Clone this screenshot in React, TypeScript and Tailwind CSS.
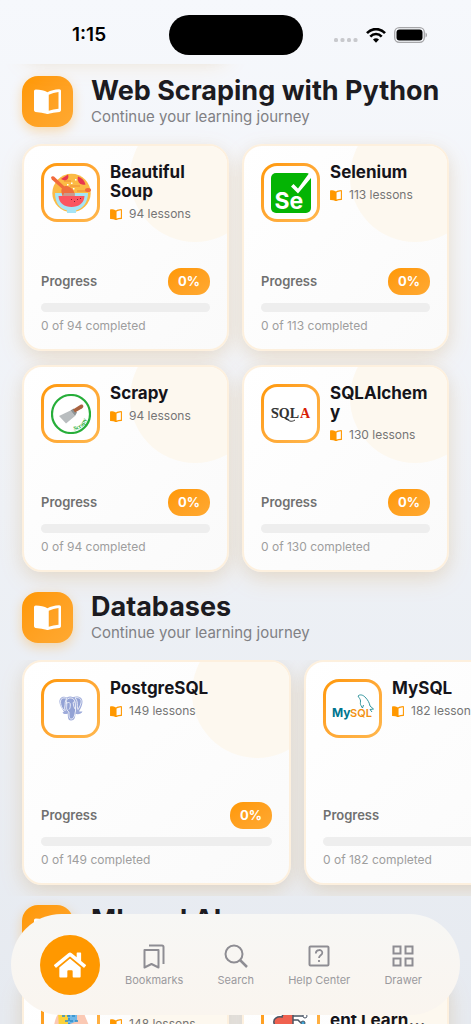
import type { ReactNode } from 'react';
import { FaHome } from 'react-icons/fa';

type Course = {
  title: string;
  lessons: number;
  logo: ReactNode;
};

function BookIcon({ className }: { className?: string }) {
  return (
    <svg viewBox="0 0 26 24" className={className} fill="currentColor" aria-hidden="true">
      <path
        fillRule="evenodd"
        d="M0 2Q0 .5 1.700.500C6 .6 10 1.400 13 3 16 1.400 20 .4 24.200 .2 25.500.2 26 .9 26 2V20.500Q26 21.900 24.600 22 18 22.500 14.200 23.800 13 24.200 11.800 23.800 8 22.500 1.400 22 0 21.900 0 20.500ZM14.200 5.500V20.800Q18.500 19.200 23.600 18.900V2.900Q18.500 3.500 14.200 5.500Z"
      />
    </svg>
  );
}

function SoupLogo() {
  return (
    <svg viewBox="0 0 40 40" className="size-10" aria-hidden="true">
      <circle cx="20.500" cy="20" r="19.200" fill="#fbbb45" />
      <path d="M19 12h10v2H19zM26 17h9v2h-9zM13 7h7v2h-7z" fill="#f5a23c" />
      <path d="M10 6l7-4.500c1.500 4-1.500 8-7 4.500z" fill="#e8384f" />
      <path d="M27 3.500c4 1.500 6.500 4 7.500 8-5 1.500-9-3-7.500-8z" fill="#e8384f" />
      <ellipse cx="37" cy="17" rx="3" ry="2" fill="#f26a3c" />
      <path d="M4 20h33c0 9-5 15.500-12 17.500V40h-9v-2.500C8 35.500 4 29 4 20z" fill="#a5e4f5" />
      <path d="M7.500 23h26c-.5 7.500-6 11-13 11s-12.500-3.500-13-11z" fill="#fb5560" />
      <path d="M20 26h1v1h-1zM26 26h1v1h-1zM23 28h1v1h-1zM29 25h1v1h-1z" fill="#7d2035" />
      <path d="M0 4.500Q1 2.500 3 3.500L13.500 13.500 11.500 16 .8 6.500z" fill="#f26a3c" />
      <path d="M10.500 19.500c-1-5 3-7.500 7-6 4 1.500 6.500 5 6 9.500H11.500z" fill="#ef6f3d" />
      <path d="M13 20h10.500v3H12z" fill="#c99a8c" />
      <path d="M16 11h1.500v1.500H16zM20 9.500h1.500V11H20zM22 15h1.500v1.500H22zM24 6h1.500v1.500H24z" fill="#fff" />
    </svg>
  );
}

function SeleniumLogo() {
  return (
    <svg viewBox="0 0 40 40" className="size-10" aria-hidden="true">
      <rect width="40" height="40" rx="5" fill="#04b404" />
      <path d="M20 13.500l2.500-2.500 4.500 4.500L37.500 1H40v4L27 20.500z" fill="#fff" />
      <text x="3.500" y="36" fontFamily="Inter, sans-serif" fontWeight="700" fontSize="23" fill="#fff">
        Se
      </text>
    </svg>
  );
}

function ScrapyLogo() {
  return (
    <svg viewBox="0 0 40 40" className="size-10" aria-hidden="true">
      <circle cx="20" cy="20" r="19" fill="#fff" stroke="#27ae3a" strokeWidth="2.200" />
      <path d="M8 22L19.500 16.500 24 22 15 29.500z" fill="#b9bdbf" />
      <path d="M19.500 16.500l3-2 3.500 4-2 3.500z" fill="#8e9496" />
      <path d="M22 15.500L29.500 10.800c2.800-1.300 3.800 2.200 1.700 3.500L24 18.500z" fill="#a9623f" />
      <path id="scrapy-arc" d="M23 36.500A16 16 0 0 0 36.500 22" fill="none" />
      <text fontFamily="Liberation Serif, serif" fontWeight="700" fontSize="6" fill="#27ae3a">
        <textPath href="#scrapy-arc">Scrapy</textPath>
      </text>
    </svg>
  );
}

function SqlAlchemyLogo() {
  return (
    <svg viewBox="0 0 40 40" className="size-10" aria-hidden="true">
      <g fontFamily="Liberation Serif, serif" fontWeight="700" fontSize="14">
        <text x="0" y="24" fill="#333">
          SQL
        </text>
        <text x="29" y="24" fill="#d81e05">
          A
        </text>
      </g>
      <path d="M0 16.500c2-3 6-1.500 8-1.500M14 24c4 3 6 4.500 10 2" fill="none" stroke="#333" />
    </svg>
  );
}

function PostgresLogo() {
  return (
    <svg viewBox="0 0 24 25" className="h-[25px] w-6" aria-hidden="true">
      <path
        d="M1 3C2.500.5 5.500.4 8 1.400 10 .4 12 .4 14 1.200 17 0 20.500.3 22.500 2.500c2.300 3 .2 8.500-2.500 12.800 1 .4 2.300.2 3.500.2-1 2.500-4.500 3.200-7 2.300-.3 3.500-.8 6.700-4.500 6.700-3.300 0-3-3.500-3.300-7-2 1-4.200.7-5.200-1l1.500-.8C1.800 11.500-.8 6.500 1 3z"
        fill="#9eabda"
      />
      <path
        d="M2 3.500c1.300-2 4-1.800 5.800-1.100C5.500 5 6.500 8 5.800 11c-.4 1.500-.1 2.500.7 3.300C3.500 15 .3 7 2 3.500zM9 2.500c4-1.500 6.500.5 7.200 4 .5 3 .3 6 .3 8.500-.8 3-1 8-4.300 8-2.500 0-2-4-2.300-7C6 13 8.500 10 7.500 7c-.3-2 .2-3.500 1.500-4.500zM16 1.800c2.500-.5 4.500 0 5.600 1.500 1.500 2.500-.5 7-2.600 10.200-1-1.500-.5-3.500-.7-6C18.200 5 17.300 3.200 16 1.800z"
        fill="#93a2d5"
        stroke="#fff"
        strokeWidth=".8"
      />
      <path d="M8 7c2-1 3.500-.5 3.300 2 0 2-.3 3.500-1.300 4.500M16 6c-1.500-.5-2.300.5-1.700 2 .5 2 .7 3.500 1.700 5" fill="none" stroke="#fff" strokeWidth=".8" />
    </svg>
  );
}

function MySqlLogo() {
  return (
    <svg viewBox="0 0 42 40" className="h-10 w-[42px]" aria-hidden="true">
      <g fontFamily="Inter, sans-serif" fontSize="12">
        <text x="0" y="28" fontWeight="700" fill="#00758f">
          My
        </text>
        <text x="18" y="28" fontWeight="600" fontSize="11" fill="#f29111">
          SQL
        </text>
      </g>
      <path
        d="M26 7c2-2 5-1 7 1 3 3 4.500 6 5 9l3.500 3-3.500.5 2 2.500M26 7c1 2 2.500 3 2.500 5 0 2-.5 3 .5 4.500.5 1 1 2 1.500 2.500l1-3"
        fill="none"
        stroke="#1d8a94"
        strokeWidth=".9"
      />
    </svg>
  );
}

function HeadLogo() {
  return (
    <svg viewBox="0 0 40 40" className="size-10" aria-hidden="true">
      <path d="M4 40c-3-9-1-24 4-29C15 1 32 2 34 14l5 12-3 3v8l-7 3z" fill="#fbc9b4" />
      <path d="M7 9h10v14l-9 4z" fill="#fbd23c" />
      <path d="M17 6h9v13l-9 4z" fill="#6fb7e8" />
      <path d="M11 14h14M14 19h13M18 11v13" fill="none" stroke="#2f8fc9" strokeWidth="1.500" strokeDasharray="3 2" />
    </svg>
  );
}

function BrainLogo() {
  return (
    <svg viewBox="0 0 40 40" className="size-10" aria-hidden="true">
      <path
        d="M22 13C19 9 12 10 11 15c-5-1-9 2-8 6 1 5 6 6 10 5 3 4 9 3 9-1z"
        fill="#f0614f"
        stroke="#4a5563"
        strokeWidth="1.500"
      />
      <path d="M22 14h10M22 18h5l3 3M22 23h6l4 4" fill="none" stroke="#4a5563" strokeWidth="1.500" />
      <circle cx="34" cy="14" r="2" fill="#fff" stroke="#4a5563" />
      <circle cx="32" cy="21" r="2" fill="#3fa9dc" stroke="#4a5563" />
      <circle cx="33" cy="28" r="2" fill="#3fa9dc" stroke="#4a5563" />
    </svg>
  );
}

const scraping: Course[] = [
  { title: 'Beautiful Soup', lessons: 94, logo: <SoupLogo /> },
  { title: 'Selenium', lessons: 113, logo: <SeleniumLogo /> },
  { title: 'Scrapy', lessons: 94, logo: <ScrapyLogo /> },
  { title: 'SQLAlchemy', lessons: 130, logo: <SqlAlchemyLogo /> },
];

const databases: Course[] = [
  { title: 'PostgreSQL', lessons: 149, logo: <PostgresLogo /> },
  { title: 'MySQL', lessons: 182, logo: <MySqlLogo /> },
];

const machineLearning: Course[] = [
  { title: 'AI', lessons: 148, logo: <HeadLogo /> },
  { title: 'Reinforcement\u00a0Learning', lessons: 120, logo: <BrainLogo /> },
];

function SectionHeader({ title }: { title: string }) {
  return (
    <div className="flex h-[52px] items-center gap-[18px] px-[22px]">
      <div className="flex size-[51px] shrink-0 items-center justify-center rounded-2xl bg-gradient-to-br from-[#ff9800] to-[#ffa931] text-white shadow-[0_4px_12px_rgba(255,152,0,0.3)]">
        <BookIcon className="h-[25px] w-[27px]" />
      </div>
      <div className="min-w-0">
        <h2 className="text-[27px] leading-8 font-bold whitespace-nowrap text-[#1c1b21]">{title}</h2>
        <p className="text-[15px] leading-5 text-[#808084]">Continue your learning journey</p>
      </div>
    </div>
  );
}

function CourseCard({ course, wide }: { course: Course; wide?: boolean }) {
  return (
    <article
      className={`rounded-[20px] shadow-[0_8px_24px_rgba(255,152,0,0.13),0_4px_16px_rgba(0,0,0,0.06)] ${
        wide ? 'h-[225px] w-[269px] shrink-0' : 'h-[207px] min-w-0'
      }`}
    >
      <div className="relative flex h-full flex-col justify-between overflow-hidden rounded-[20px] border-2 border-[#fdf0de] bg-gradient-to-br from-white to-[#fafafa] p-[17px] pb-[13px]">
        <div className="absolute -top-[34px] -right-[33px] size-[130px] rounded-full bg-[#fdf8ef]" />
        <div className="relative flex gap-2.5">
          <div className="size-[59px] shrink-0 rounded-2xl bg-gradient-to-br from-[#ff9800] to-[#ffb74d] p-[3px]">
            <div className="flex size-full items-center justify-center rounded-[13px] bg-white">{course.logo}</div>
          </div>
          <div className="min-w-0 flex-1">
            <h3 className="line-clamp-2 text-[17px] leading-[19px] font-bold break-words text-[#15141a]">
              {course.title}
            </h3>
            <p className="mt-[3px] flex items-center gap-[7px] text-xs leading-5 whitespace-nowrap text-[#757575]">
              <BookIcon className="h-[11px] w-3 shrink-0 text-[#ff9800]" />
              {course.lessons} lessons
            </p>
          </div>
        </div>
        <div className="relative">
          <div className="flex items-center justify-between">
            <span className="text-[13px] font-semibold text-[#707070]">Progress</span>
            <span className="rounded-[13px] bg-gradient-to-br from-[#ff9800] to-[#ffa931] px-2.5 py-1 text-[13px] leading-[19px] font-bold text-white">
              0%
            </span>
          </div>
          <div
            className="mt-2 h-[9px] rounded-full bg-[#eeeeee]"
            role="progressbar"
            aria-label={course.title}
            aria-valuenow={0}
          />
          <p className="mt-1 text-xs leading-5 text-[#9e9e9e]">0 of {course.lessons} completed</p>
        </div>
      </div>
    </article>
  );
}

function StatusBar() {
  return (
    <header className="grid h-[64px] shrink-0 grid-cols-[1fr_134px_1fr] items-center pt-1.5 text-black">
      <time className="pl-[72px] text-[19px] leading-6 font-semibold">1:15</time>
      <div className="h-10 rounded-full bg-black" />
      <div className="flex items-center justify-end gap-2 pr-[43px]">
        <svg viewBox="0 0 24 5" className="mt-2.5 h-[5px] w-6" fill="#c8c9cd" aria-hidden="true">
          <rect width="4" height="4" rx="1.500" />
          <rect x="6.500" width="4" height="4" rx="1.500" />
          <rect x="13" width="4" height="4" rx="1.500" />
          <rect x="19.500" width="4" height="4" rx="1.500" />
        </svg>
        <svg viewBox="0 0 20 15" className="h-[15px] w-5" fill="none" stroke="currentColor" aria-hidden="true">
          <path d="M1 5.200C6-.3 14-.3 19 5.200" strokeWidth="2.600" />
          <path d="M4.300 8.600C7.500 5.200 12.500 5.200 15.700 8.600" strokeWidth="2.600" />
          <path d="M7 11.500Q10 8.800 13 11.500L10 14.700Z" fill="currentColor" stroke="none" />
        </svg>
        <svg viewBox="0 0 34 16" className="h-4 w-[34px]" aria-hidden="true">
          <rect x=".7" y=".7" width="29.600" height="14.600" rx="4.500" fill="none" stroke="#a6a6a9" strokeWidth="1.300" />
          <rect x="2.500" y="2.500" width="26" height="11" rx="3" fill="#000" />
          <path d="M31.500 5.500c2 .8 2 4.200 0 5z" fill="#a6a6a9" />
        </svg>
      </div>
    </header>
  );
}

function NavItem({ label, children }: { label: string; children: ReactNode }) {
  return (
    <button type="button" className="flex flex-col items-center gap-0.5 text-[#8e8d93]">
      <svg viewBox="0 0 28 28" className="size-7" fill="none" stroke="currentColor" strokeWidth="2" aria-hidden="true">
        {children}
      </svg>
      <span className="text-[11px] leading-4 whitespace-nowrap text-[#9b9a9e]">{label}</span>
    </button>
  );
}

function BottomNav() {
  return (
    <nav className="absolute inset-x-[11px] bottom-[9px] flex h-[101px] items-center gap-[25px] rounded-full bg-gradient-to-b from-[#f7f7f5] to-[#faf5ef] pr-[38px] pl-[29px]">
      <button
        type="button"
        aria-label="Home"
        className="flex size-[60px] shrink-0 items-center justify-center rounded-full bg-[#ff9800] text-white"
      >
        <FaHome className="size-8" />
      </button>
      <div className="flex flex-1 items-center justify-between">
        <NavItem label="Bookmarks">
          <path d="M4.500 8h14v17.500l-7-3.500-7 3.500z" strokeLinejoin="round" />
          <path d="M9 3.500h13a1.500 1.500 0 0 1 1.500 1.500v17" />
        </NavItem>
        <NavItem label="Search">
          <circle cx="12" cy="12" r="8.500" />
          <path d="M18 18l7 7" strokeWidth="2.500" />
        </NavItem>
        <NavItem label="Help Center">
          <rect x="4.500" y="4.500" width="19" height="19" rx="1" />
          <path d="M10.800 11.500c0-4.500 6.500-4.500 6.500-.8 0 2.500-3.300 2.700-3.300 5.300M14 18v2" strokeWidth="1.800" />
        </NavItem>
        <NavItem label="Drawer">
          <path d="M4.500 4.500h7v7h-7zM16.500 4.500h7v7h-7zM4.500 16.500h7v7h-7zM16.500 16.500h7v7h-7z" />
        </NavItem>
      </div>
    </nav>
  );
}

export default function App() {
  return (
    <div className="relative flex h-screen flex-col overflow-hidden bg-gradient-to-b from-[#f6f8fc] to-[#e6eaf0] font-[Inter,sans-serif]">
      <StatusBar />
      <main className="relative min-h-0 flex-1 overflow-hidden pt-[11px]">
        {/* shadow left by the card scrolled out above */}
        <div className="absolute -top-10 left-[22px] h-8 w-[207px] rounded-[20px] shadow-[0_8px_24px_rgba(255,152,0,0.13),0_4px_16px_rgba(0,0,0,0.06)]" />

        <section>
          <SectionHeader title="Web Scraping with Python" />
          <div className="mt-[17px] grid grid-cols-2 gap-x-[13px] gap-y-3.5 px-[22px]">
            {scraping.map((course) => (
              <CourseCard key={course.title} course={course} />
            ))}
          </div>
        </section>

        <section className="mt-[19px]">
          <SectionHeader title="Databases" />
          <div className="mt-[17px] flex gap-[13px] overflow-hidden px-[22px] pb-[11px]">
            {databases.map((course) => (
              <CourseCard key={course.title} course={course} wide />
            ))}
          </div>
        </section>

        <section className="mt-2">
          <SectionHeader title="ML and AI" />
          <div className="mt-[17px] grid grid-cols-2 gap-x-[13px] gap-y-3.5 px-[22px]">
            {machineLearning.map((course) => (
              <CourseCard key={course.title} course={course} />
            ))}
          </div>
        </section>
      </main>
      <BottomNav />
    </div>
  );
}
